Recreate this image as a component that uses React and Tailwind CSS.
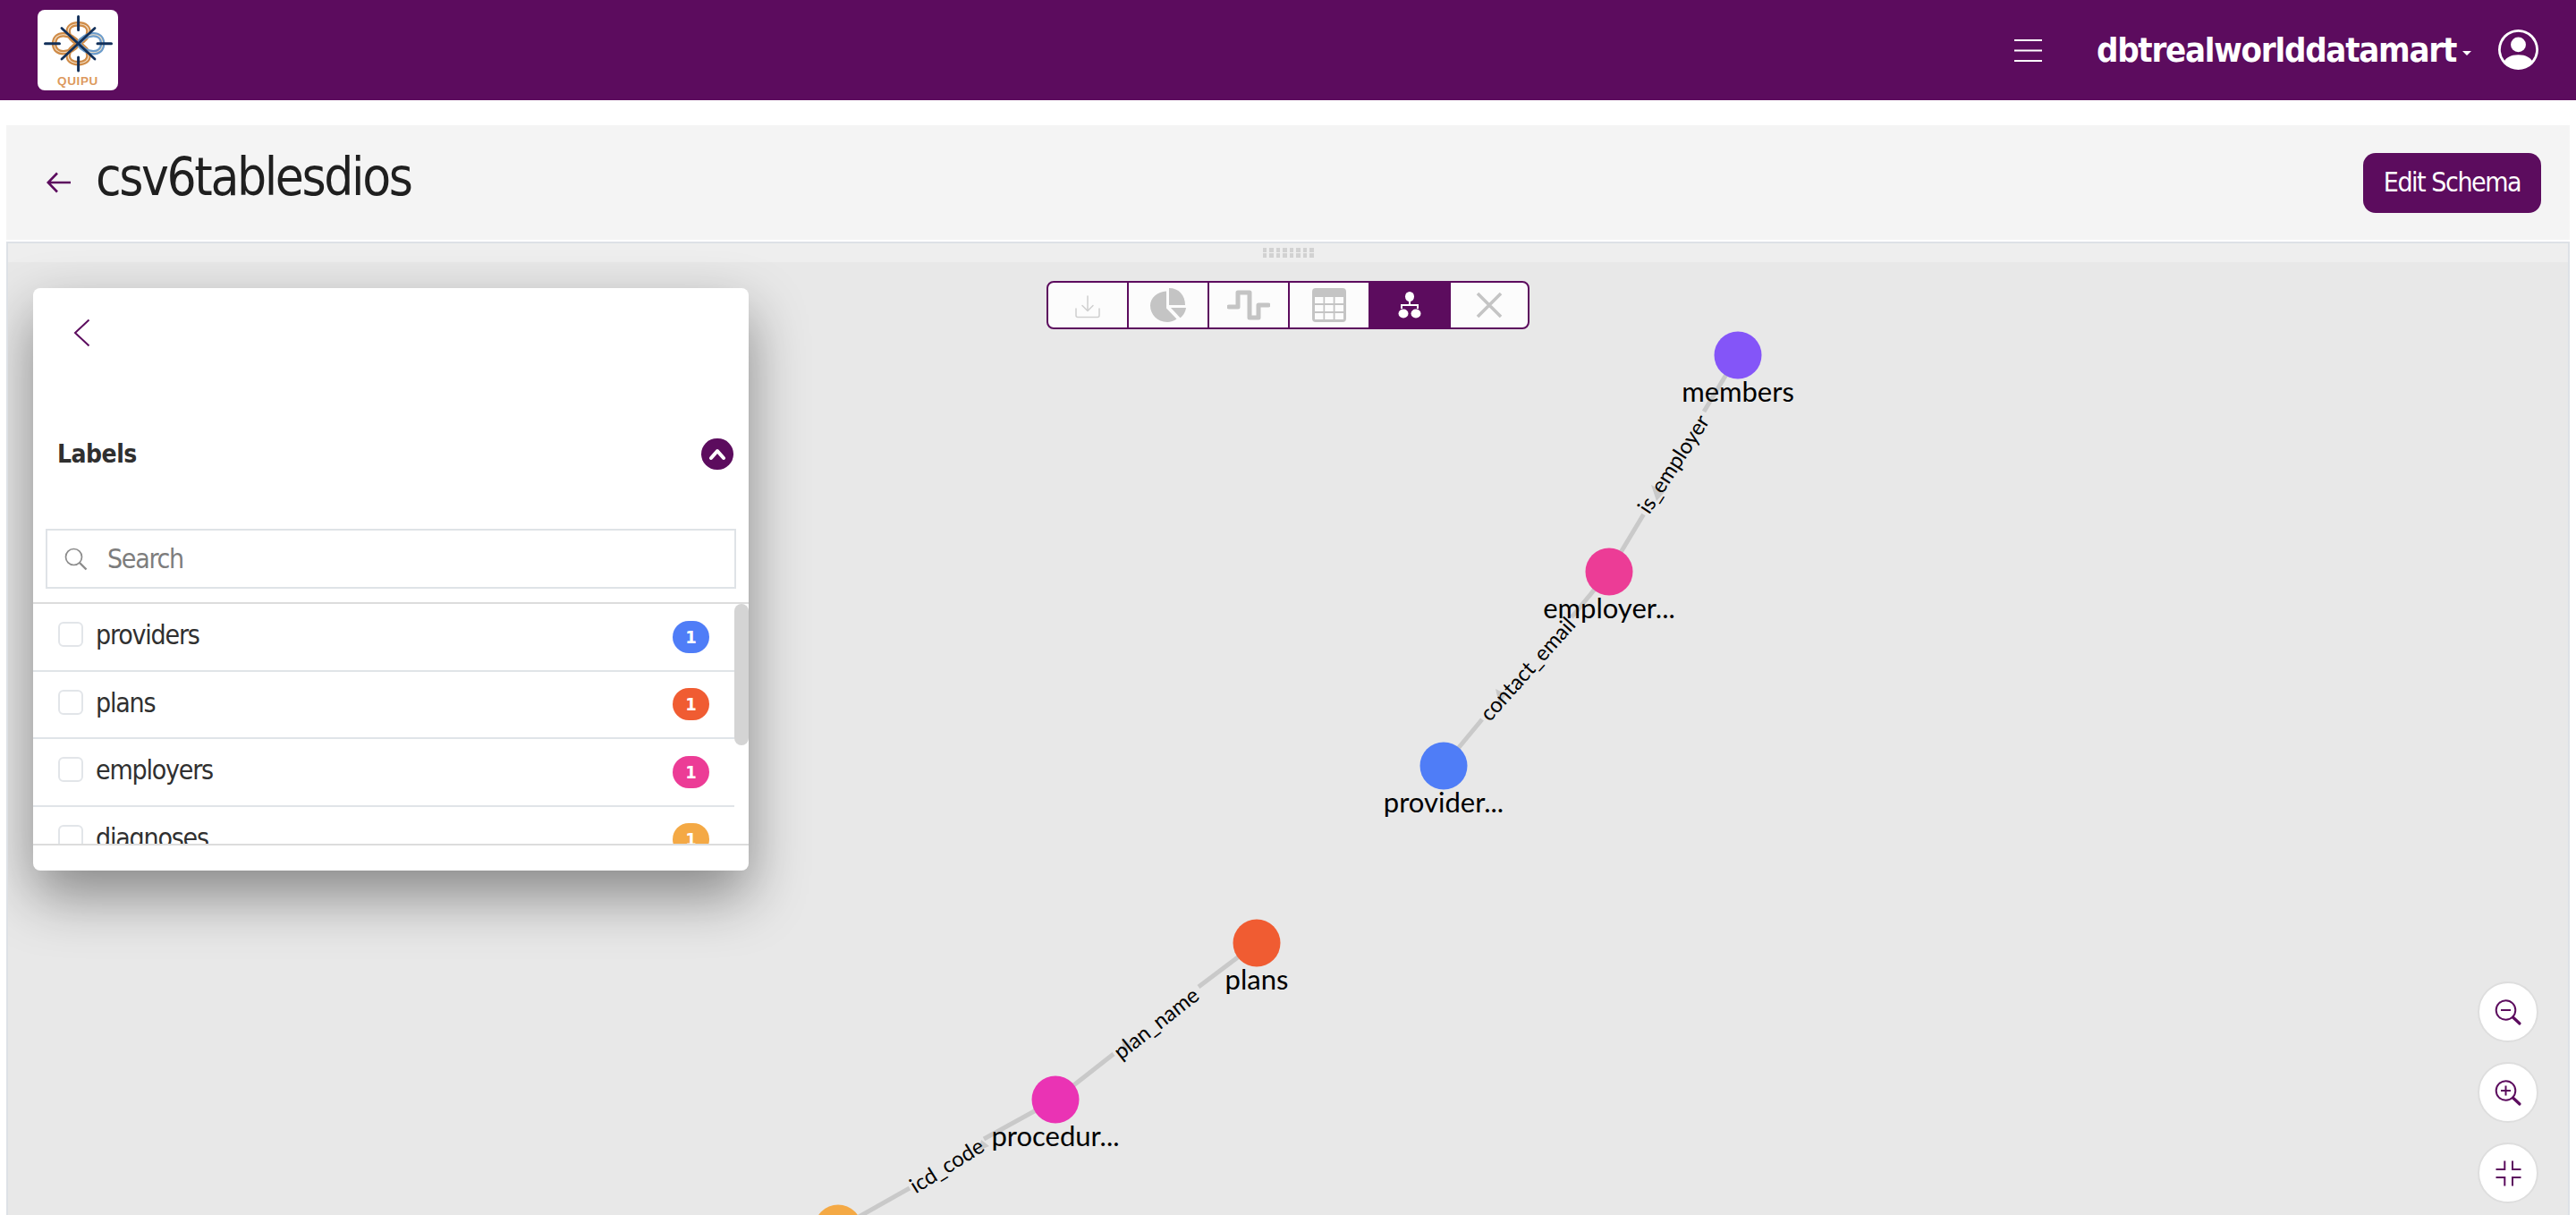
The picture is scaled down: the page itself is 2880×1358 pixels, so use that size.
import React from "react";
import { BsPersonCircle } from "react-icons/bs";

const PURPLE = "#5c0c5e";

function Logo() {
  const loop = (r, len, w, color) => (
    <g transform={`rotate(${r} 45.6 37.7) translate(45.6 37.7)`} key={r}>
      <path d={`M0 0 C${-w * 0.9} ${-len * 0.3} ${-w} ${-len} 0 ${-len} C${w} ${-len} ${w * 0.9} ${-len * 0.3} 0 0`} fill="none" stroke={color} strokeWidth="5.4" />
      <path d={`M0 0 C${-w * 0.9} ${-len * 0.3} ${-w} ${-len} 0 ${-len} C${w} ${-len} ${w * 0.9} ${-len * 0.3} 0 0`} fill="none" stroke="#f3dfc6" strokeWidth="1.1" />
    </g>
  );
  return (
    <div className="flex h-[90px] w-[90px] flex-col items-center rounded-[8px] bg-white">
      <svg width="90" height="72" viewBox="0 0 90 72" className="shrink-0">
        {loop(0, 22, 16, "#cf8b47")}
        {loop(180, 22, 16, "#cf8b47")}
        {loop(270, 27, 14, "#cf8b47")}
        {loop(90, 27, 14, "#6c9ccb")}
        <g stroke="#12305a" strokeWidth="3" strokeLinecap="round">
          <path d="M45.6 7.5V22.5M45.6 53V68M8.5 37.7H24.5M67 37.7H82.5" />
          <path d="M27 20.500L64 55M64 20.500L27 55" strokeWidth="2.800" />
        </g>
      </svg>
      <span className="mt-[1px] font-['Liberation_Sans',sans-serif] text-[13.5px] leading-[14px] font-bold tracking-[0.6px] text-[#dd9a5e]">QUIPU</span>
    </div>
  );
}

const G = "#c4c4c4";

function ToolIcons() {
  return (
    <div className="flex h-[54px] w-[540px] overflow-hidden rounded-[8px] border-2 border-[#5c0c5e] bg-[#fcfcfc]">
      <div className="flex w-[90px] items-center justify-center border-r-2 border-[#5c0c5e] pt-[3px]">
        <svg width="30" height="26" viewBox="0 0 30 26" fill="none" stroke="#cfcfcf" strokeWidth="1.5" strokeLinecap="round" strokeLinejoin="round">
          <path d="M15 1V17M9 11.5L15 17.5L21 11.5" />
          <path d="M2 15V22.5Q2 24.5 4 24.5H26Q28 24.5 28 22.5V15" />
        </svg>
      </div>
      <div className="flex w-[90px] items-center justify-center border-r-2 border-[#5c0c5e]">
        <svg width="42" height="38" viewBox="0 0 42 38" fill={G}>
          <path d="M19 3.5V22.5L30.5 34.5C27.5 36.7 24 38 20 38C9 38 1 29.5 1 19.5C1 11 9 3.8 19 3.5Z" />
          <path d="M22 0C33 0 40 8 40 19H22Z" />
          <path d="M24 22H41C40.5 26 38 31 34.500 33.200Z" />
        </svg>
      </div>
      <div className="flex w-[90px] items-center justify-center border-r-2 border-[#5c0c5e]">
        <svg width="48" height="34" viewBox="0 0 48 34" fill="none" stroke={G} strokeWidth="5" strokeLinejoin="round" strokeLinecap="round">
          <path d="M2 19H12V3H25V31H35V17H46" />
        </svg>
      </div>
      <div className="flex w-[88px] items-center justify-center">
        <svg width="38" height="38" viewBox="0 0 38 38">
          <rect width="38" height="38" rx="4" fill={G} />
          <g fill="#fcfcfc">
            <rect x="3" y="10" width="9.500" height="7" />
            <rect x="14.200" y="10" width="9.500" height="7" />
            <rect x="25.500" y="10" width="9.500" height="7" />
            <rect x="3" y="19" width="9.500" height="7" />
            <rect x="14.200" y="19" width="9.500" height="7" />
            <rect x="25.500" y="19" width="9.500" height="7" />
            <rect x="3" y="28" width="9.500" height="7" />
            <rect x="14.200" y="28" width="9.500" height="7" />
            <rect x="25.500" y="28" width="9.500" height="7" />
          </g>
        </svg>
      </div>
      <div className="flex w-[92px] items-center justify-center bg-[#5c0c5e]">
        <svg width="26" height="30" viewBox="0 0 26 30" fill="#fff">
          <ellipse cx="13" cy="5.500" rx="5" ry="5.500" />
          <path d="M12 10H14V14H23V19H21V16H5V19H3V14H12Z" />
          <ellipse cx="6" cy="24.500" rx="5.500" ry="5" />
          <ellipse cx="20" cy="24.500" rx="5.500" ry="5" />
        </svg>
      </div>
      <div className="flex flex-1 items-center justify-center">
        <svg width="30" height="30" viewBox="0 0 30 30" stroke={G} strokeWidth="3.6">
          <path d="M2 2L28 28M28 2L2 28" />
        </svg>
      </div>
    </div>
  );
}

const rows = [
  ["providers", "bg-[#4f7df7]"],
  ["plans", "bg-[#f05c32]"],
  ["employers", "bg-[#ec3c96]"],
  ["diagnoses", "bg-[#f4a945]"],
];

function Panel() {
  return (
    <div className="absolute top-[29px] left-[28px] flex h-[651px] w-[800px] flex-col rounded-[8px] bg-white shadow-[0_28px_64px_rgba(0,0,0,0.42)]">
      <div className="flex h-[88px] shrink-0 items-end pb-[22px] pl-[45px]">
        <svg width="20" height="32" viewBox="0 0 20 32" fill="none" stroke={PURPLE} strokeWidth="2">
          <path d="M17.500 1.500L2 16L17.500 30.500" />
        </svg>
      </div>
      <div className="flex h-[181px] shrink-0 items-center justify-between pt-[14px] pr-[17px] pl-[27px]">
        <span className="text-[28px] leading-none font-bold tracking-[-0.5px] text-[#2f2f2f]">Labels</span>
        <span className="flex h-[35px] w-[36px] items-center justify-center rounded-full bg-[#5c0c5e]">
          <svg width="20" height="14" viewBox="0 0 20 14" fill="none" stroke="#fff" strokeWidth="4" strokeLinecap="round" strokeLinejoin="round">
            <path d="M3 11L10 3L17 11" />
          </svg>
        </span>
      </div>
      <div className="mx-[14px] flex h-[67px] shrink-0 items-center border-2 border-[#dfe3e7] pl-[19px]">
        <svg width="26" height="26" viewBox="0 0 26 26" fill="none" stroke="#8c8c8c" strokeWidth="1.700">
          <circle cx="10.500" cy="10.500" r="9" />
          <path d="M17 17L24.500 24.500" strokeWidth="2.400" />
        </svg>
        <span className="ml-[22px] text-[30px] leading-none tracking-[-1.3px] text-[#7d7d7d]">Search</span>
      </div>
      <div className="relative mt-[15px] h-[272px] shrink-0 overflow-hidden border-y-2 border-[#dcdcdc]">
        {rows.map(([name, color]) => (
          <div key={name} className="flex h-[75.5px] w-[784px] items-center border-b-2 border-[#e0e4e8] px-[28px]">
            <span className="-mt-[5px] h-[28px] w-[28px] shrink-0 rounded-[6px] border-2 border-[#e2e5e9]"></span>
            <span className="-mt-[3px] ml-[14px] text-[30px] leading-none tracking-[-1.2px] text-[#303030]">{name}</span>
            <span className={`ml-auto flex h-[36px] w-[41px] items-center justify-center rounded-full text-[20px] leading-none font-bold text-white ${color}`}>1</span>
          </div>
        ))}
        <div className="absolute top-0 right-0 h-[158px] w-[16px] rounded-full bg-[#d4d4d4]"></div>
      </div>
    </div>
  );
}

function Node({ x, y, fill, label, ry = 26.5 }) {
  return (
    <>
      <ellipse cx={x} cy={y} rx="26.5" ry={ry} fill={fill} />
      <text x={x} y={y + 52} textAnchor="middle" fontSize="31" fill="#000" fontFamily="Lato, sans-serif">{label}</text>
    </>
  );
}

function EdgeLabel({ x, y, a, children }) {
  return (
    <text x={x} y={y} textAnchor="middle" dominantBaseline="central" fontSize="24" fill="#000" fontFamily="Lato, sans-serif" transform={`rotate(${a} ${x} ${y})`}>{children}</text>
  );
}

function Graph() {
  return (
    <svg className="absolute top-0 left-0 h-full w-full" viewBox="9 293 2862 1065">
      <g stroke="#c9c9c9" strokeWidth="5">
        <path d="M1943 397L1905 460M1837.500 575L1799 639" />
        <path d="M1799 639L1757 690M1657 804L1614 856" />
        <path d="M1180 1229L1245 1178M1340 1103L1405 1054" />
        <path d="M937 1373L1017 1328M1100 1273L1180 1229" />
      </g>
      <g fill="#c9c9c9">
        <path d="M1846 542L1861 550L1852 560Z" />
        <path d="M1672 770L1684 776L1676 787Z" />
        <path d="M1254 1160L1266 1168L1256 1176Z" />
        <path d="M1097 1274L1106 1281L1094 1286Z" />
      </g>
      <Node x={1943} y={397} fill="#8455f8" label="members" />
      <Node x={1799} y={639} fill="#ec3c96" label="employer..." />
      <Node x={1614} y={856} fill="#4f7df7" label="provider..." />
      <Node x={1405} y={1054} fill="#f05c32" label="plans" />
      <Node x={1180} y={1229} fill="#ea33b4" label="procedur..." />
      <Node x={937} y={1373} fill="#f4a945" label="" />
      <EdgeLabel x={1870} y={518} a={-57}>is_employer</EdgeLabel>
      <EdgeLabel x={1707} y={747} a={-48}>contact_email</EdgeLabel>
      <EdgeLabel x={1292} y={1143} a={-38}>plan_name</EdgeLabel>
      <EdgeLabel x={1058} y={1302} a={-32}>icd_code</EdgeLabel>
    </svg>
  );
}

function ZoomBtn({ children }) {
  return (
    <button className="flex h-[68px] w-[68px] items-center justify-center rounded-full border-2 border-[#dedede] bg-white">
      <svg width="68" height="68" viewBox="0 0 68 68" fill="none" stroke={PURPLE} strokeWidth="2" className="shrink-0">{children}</svg>
    </button>
  );
}

export default function App() {
  return (
    <div className="flex h-[1358px] w-[2880px] flex-col overflow-hidden bg-white font-['DejaVu_Sans_Condensed','DejaVu_Sans',sans-serif]">
      <header className="flex h-[112px] shrink-0 items-center bg-[#5c0c5e] px-[42px] text-white">
        <Logo />
        <svg width="32" height="26" viewBox="0 0 32 26" stroke="#fff" strokeWidth="2" className="mr-[61px] ml-auto">
          <path d="M1 2H32M1 13.500H32M1 25H32" />
        </svg>
        <span className="text-[38px] leading-none font-bold tracking-[-1.25px]">dbtrealworlddatamart</span>
        <span className="mt-[6px] ml-[7px] h-0 w-0 border-x-[5px] border-t-[5px] border-x-transparent border-t-white"></span>
        <BsPersonCircle size={45} className="-mt-[2px] ml-[30px] shrink-0" />
      </header>
      <div className="mx-[7px] mt-[28px] flex h-[128px] shrink-0 items-center bg-[#f4f4f4] pr-[32px] pl-[45px]">
        <svg width="28" height="24" viewBox="0 0 28 24" fill="none" stroke={PURPLE} strokeWidth="2.600" className="shrink-0">
          <path d="M27 12H2M12 1.500L1.800 12L12 22.500" />
        </svg>
        <h1 className="-mt-[12px] ml-[27px] text-[58px] leading-none font-normal tracking-[-2.4px] text-[#1f1f1f]">csv6tablesdios</h1>
        <button className="ml-auto h-[67px] w-[199px] rounded-[14px] bg-[#5c0c5e] text-[30px] leading-none tracking-[-1.45px] text-white">Edit Schema</button>
      </div>
      <div className="mx-[7px] mt-[2px] flex min-h-0 flex-1 flex-col overflow-hidden border-x-2 border-t-2 border-[#dde1e6]">
        <div className="flex h-[21px] shrink-0 items-center justify-center bg-[#eeeeee]">
          <div className="grid grid-cols-8 gap-x-[3px] gap-y-[1px]">
            {Array.from({ length: 16 }).map((_, i) => (
              <span key={i} className="h-[5px] w-[4.500px] bg-[#d2d2d2]"></span>
            ))}
          </div>
        </div>
        <div className="relative flex-1 bg-[#e8e8e8]">
          <Graph />
          <div className="absolute top-[21px] left-[1161px]"><ToolIcons /></div>
          <Panel />
          <div className="absolute top-[804px] right-[33px] flex flex-col gap-[22px]">
            <ZoomBtn>
              <circle cx="31.500" cy="32" r="10.800" />
              <path d="M26 32H37" />
              <path d="M39.500 40L47 47" strokeWidth="3.200" strokeLinecap="round" />
            </ZoomBtn>
            <ZoomBtn>
              <circle cx="31.500" cy="32" r="10.800" />
              <path d="M26 32H37M31.500 26.500V37.500" />
              <path d="M39.500 40L47 47" strokeWidth="3.200" strokeLinecap="round" />
            </ZoomBtn>
            <ZoomBtn>
              <path d="M20.500 30H30.300V20.500M39 20.500V30H48.500M20.500 39H30.300V48.500M39 48.500V39H48.500" />
            </ZoomBtn>
          </div>
        </div>
      </div>
    </div>
  );
}
